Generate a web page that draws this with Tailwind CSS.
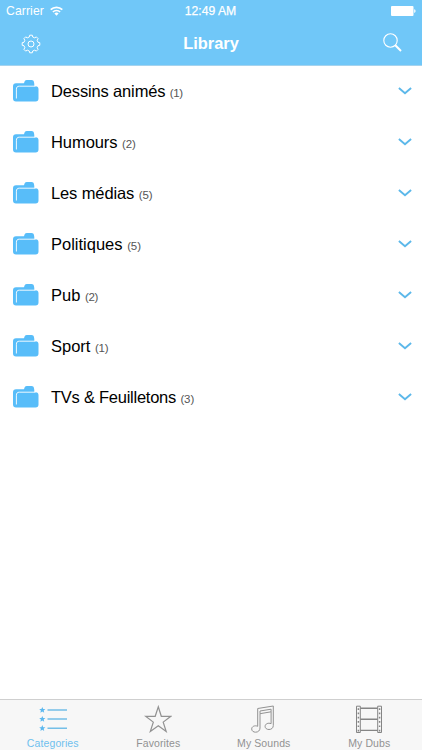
<!DOCTYPE html>
<html lang="en">
<head>
  <meta charset="UTF-8">
  <meta name="viewport" content="width=device-width, initial-scale=1.0">
  <title>Library</title>
  <script src="https://cdn.jsdelivr.net/npm/@tailwindcss/browser@4"></script>
</head>
<body class="bg-white font-['Liberation_Sans',Arial,sans-serif]">
  <!-- Shared icons -->
  <svg class="hidden">
    <symbol id="folder" viewBox="0 0 26 22">
      <path fill="#58bdf9" d="M3 3.300h7.200c.9 0 1-.5 1.200-1.300C11.700.7 12.500 0 13.800 0h4.700C20 0 20.800.8 21 2.200c.1.900.3 1.100.3 2.300v1.700h1.200c2 0 3 1 3 3v9.300c0 2-1 3-3 3H3c-2 0-3-1-3-3V6.300c0-2 1-3 3-3z"/>
      <path fill="none" stroke="#fff" stroke-width=".9" d="M3.400 18.500V9.200c0-2 .9-3 3-3h16.100"/>
    </symbol>
    <symbol id="chevron" viewBox="0 0 14 8">
      <path fill="none" stroke="#5cb8ea" stroke-width="1.900" d="M.9 1 7 6.300 13.100 1"/>
    </symbol>
  </svg>

  <div class="flex h-[750px] w-[422px] flex-col overflow-hidden">
    <header class="h-[66px] border-b border-[#a5d3ee] bg-[#70c7f8] text-white">
      <div class="grid h-[22px] grid-cols-3 items-center px-[6px] text-[12.2px] leading-[22px]">
        <div class="flex items-center gap-[6px]">
          <span class="tracking-[0.1px]">Carrier</span>
          <svg class="h-[10px] w-[13px]" viewBox="0 0 13 10" fill="none" stroke="#fff" stroke-width="1.700">
            <path d="M.7 3.700a8.200 8.200 0 0 1 11.600 0M2.900 6a5.100 5.100 0 0 1 7.200 0"/>
            <path fill="#fff" stroke="none" d="M4.400 7.600a3 3 0 0 1 4.200 0L6.500 9.700z"/>
          </svg>
        </div>
        <span class="pr-px text-center [-webkit-text-stroke:0.25px_white]">12:49 AM</span>
        <svg class="h-[10px] w-[25px] justify-self-end" viewBox="0 0 25 10" fill="#fff">
          <rect width="22.500" height="10" rx="1"/>
          <path d="M23.200 3.200c1.800 0 1.800 3.600 0 3.600z"/>
        </svg>
      </div>
      <div class="flex h-[43px] items-center justify-between pr-[20px] pl-[21px]">
        <svg class="size-[20px]" viewBox="-10 -10 20 20" fill="none" stroke="#fff" stroke-width="1" stroke-linejoin="round">
          <path d="M-1.700-7-1.300-8.800H1.300L1.700-7 3.750-6.150 5.300-7.140 7.140-5.300 6.150-3.750 7-1.700 8.800-1.300V1.300L7 1.700 6.150 3.750 7.140 5.300 5.300 7.140 3.750 6.150 1.700 7 1.300 8.800H-1.300L-1.700 7-3.750 6.150-5.300 7.140-7.140 5.300-6.150 3.750-7 1.700-8.800 1.300V-1.300L-7-1.700-6.150-3.750-7.140-5.300-5.300-7.140-3.750-6.150z"/>
          <circle r="3"/>
        </svg>
        <h1 class="pr-[2px] text-[16.400px] font-bold">Library</h1>
        <svg class="mb-[3px] size-[19px]" viewBox="0 0 19 19" fill="none" stroke="#fff">
          <circle cx="7.500" cy="7.500" r="6.700" stroke-width="1.100"/>
          <path stroke-width="2" d="m12.300 12.300 5.700 5.700"/>
        </svg>
      </div>
    </header>

    <main class="flex-1">
      <ul class="text-[16.500px] text-black">
        <li class="flex h-[51px] items-center pr-[10.500px] pl-[13px]">
          <svg class="mr-[12px] mb-[2px] h-[22px] w-[26px]"><use href="#folder"/></svg>
          <span class="tracking-[-0.150px]">Dessins animés <small class="text-[11.500px] tracking-[-0.350px] text-[#555]">(1)</small></span>
          <svg class="mb-[2px] ml-auto h-[8px] w-[14px]"><use href="#chevron"/></svg>
        </li>
        <li class="flex h-[51px] items-center pr-[10.500px] pl-[13px]">
          <svg class="mr-[12px] mb-[2px] h-[22px] w-[26px]"><use href="#folder"/></svg>
          <span class="tracking-[-0.070px]">Humours <small class="text-[11.500px] tracking-[-0.100px] text-[#555]">(2)</small></span>
          <svg class="mb-[2px] ml-auto h-[8px] w-[14px]"><use href="#chevron"/></svg>
        </li>
        <li class="flex h-[51px] items-center pr-[10.500px] pl-[13px]">
          <svg class="mr-[12px] mb-[2px] h-[22px] w-[26px]"><use href="#folder"/></svg>
          <span class="tracking-[-0.120px]">Les médias <small class="text-[11.500px] tracking-[-0.100px] text-[#555]">(5)</small></span>
          <svg class="mb-[2px] ml-auto h-[8px] w-[14px]"><use href="#chevron"/></svg>
        </li>
        <li class="flex h-[51px] items-center pr-[10.500px] pl-[13px]">
          <svg class="mr-[12px] mb-[2px] h-[22px] w-[26px]"><use href="#folder"/></svg>
          <span>Politiques <small class="text-[11.500px] tracking-[-0.100px] text-[#555]">(5)</small></span>
          <svg class="mb-[2px] ml-auto h-[8px] w-[14px]"><use href="#chevron"/></svg>
        </li>
        <li class="flex h-[51px] items-center pr-[10.500px] pl-[13px]">
          <svg class="mr-[12px] mb-[2px] h-[22px] w-[26px]"><use href="#folder"/></svg>
          <span>Pub <small class="text-[11.500px] tracking-[-0.300px] text-[#555]">(2)</small></span>
          <svg class="mb-[2px] ml-auto h-[8px] w-[14px]"><use href="#chevron"/></svg>
        </li>
        <li class="flex h-[51px] items-center pr-[10.500px] pl-[13px]">
          <svg class="mr-[12px] mb-[2px] h-[22px] w-[26px]"><use href="#folder"/></svg>
          <span>Sport <small class="text-[11.500px] tracking-[-0.300px] text-[#555]">(1)</small></span>
          <svg class="mb-[2px] ml-auto h-[8px] w-[14px]"><use href="#chevron"/></svg>
        </li>
        <li class="flex h-[51px] items-center pr-[10.500px] pl-[13px]">
          <svg class="mr-[12px] mb-[2px] h-[22px] w-[26px]"><use href="#folder"/></svg>
          <span class="tracking-[-0.250px]">TVs &amp; Feuilletons <small class="text-[11.500px] tracking-[-0.100px] text-[#555]">(3)</small></span>
          <svg class="mb-[2px] ml-auto h-[8px] w-[14px]"><use href="#chevron"/></svg>
        </li>
      </ul>
    </main>

    <!-- Tab bar -->
    <nav class="grid h-[51px] grid-cols-4 border-t border-[#cfcfcf] bg-[#f7f7f7] pt-[5px] text-[10.500px] leading-[12px] tracking-[0.1px] text-[#929292]">
      <a class="flex flex-col items-center gap-[4px] text-[#6fc0ee]">
        <svg class="h-[28px] w-[28px]" viewBox="0 0 28 28">
          <defs><path id="bullet" d="M0-3.100 .9-1 3.100-.9 1.400.6 1.900 2.700 0 1.500-1.900 2.700-1.400.6-3.100-.9-.9-1z"/></defs>
          <g fill="#5cb8ef">
            <use href="#bullet" x="3.300" y="5"/>
            <use href="#bullet" x="3.300" y="14"/>
            <use href="#bullet" x="3.300" y="23.200"/>
          </g>
          <path stroke="#74bfe8" stroke-width="1.600" d="M8.500 5H28M8.500 14H28M8.500 23.200H28"/>
        </svg>
        <span>Categories</span>
      </a>
      <a class="flex flex-col items-center gap-[4px]">
        <svg class="h-[28px] w-[28px]" viewBox="0 0 28 28" fill="none" stroke="#929292" stroke-width="1.200">
          <path d="M14.300 1.800 17.300 11.300H26.800L19.200 17.100 22.200 26.500 14.300 20.700 6.300 26.500 9.300 17.100 1.600 11.300H11.200z"/>
        </svg>
        <span>Favorites</span>
      </a>
      <a class="flex flex-col items-center gap-[4px]">
        <svg class="h-[28px] w-[28px]" viewBox="0 0 28 28" fill="none" stroke="#929292" stroke-width="1">
          <path d="M7.700 3.500 23.300 1V20.500c0 2.500-1.900 4-4.300 4-2.200 0-3.900-1.200-3.900-3.100 0-2.500 3-4 6-2.700V6.800L10 8.700V23c0 2.500-1.900 4.200-4.400 4.200-2.200 0-3.900-1.300-3.900-3.200 0-2.500 3-4 6-2.700z"/>
          <path d="M10 8.700V6L21.100 4.200V6.800"/>
        </svg>
        <span>My Sounds</span>
      </a>
      <a class="flex flex-col items-center gap-[4px]">
        <svg class="h-[28px] w-[28px]" viewBox="0 0 28 28" fill="none" stroke="#858585" stroke-width="1">
          <path d="M1.500 1.200H5.300V27.500H1.500zM22.700 1.200H26.500V27.500H22.700z"/>
          <path stroke-width="1.400" d="M5.300 3.200H22.700M5.300 14.300H22.700M5.300 25.400H22.700"/>
          <path stroke-width="1.500" stroke-dasharray="1.700 2.600" d="M3.400 3.200V26.500M24.600 3.200V26.500"/>
        </svg>
        <span>My Dubs</span>
      </a>
    </nav>
  </div>
</body>
</html>
